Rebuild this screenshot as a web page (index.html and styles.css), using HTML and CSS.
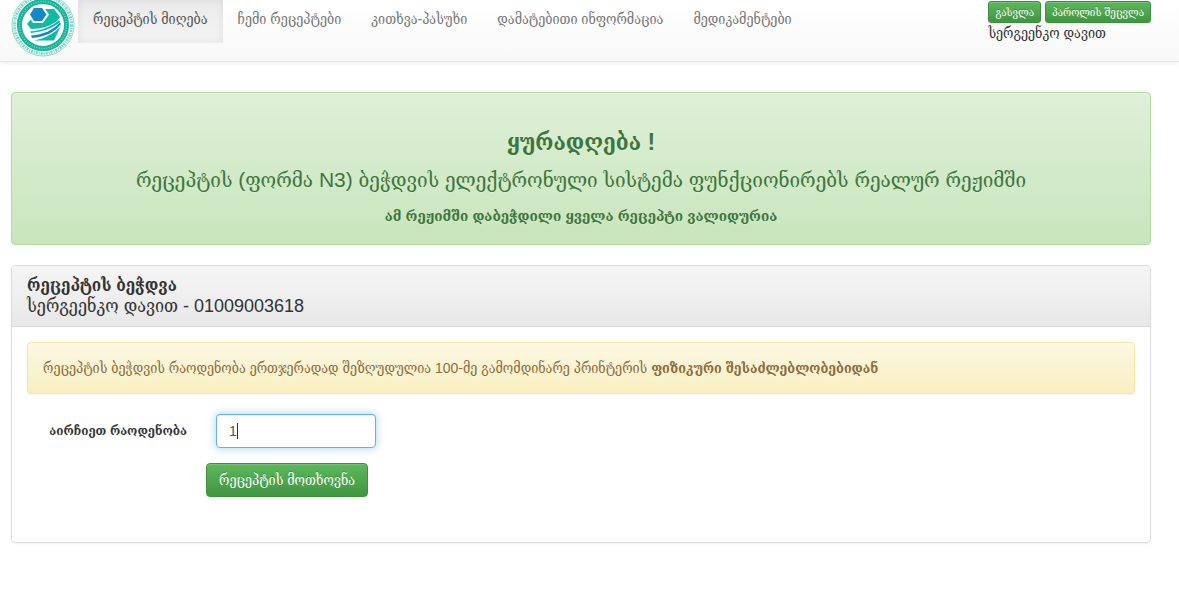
FILE: index.html
```html
<!DOCTYPE html>
<html lang="ka">
<head>
    <meta charset="UTF-8">
    <meta name="viewport" content="width=device-width, initial-scale=1.0">
    <title>რეცეპტის მიღება</title>
    <link rel="stylesheet" href="styles.css">
</head>
<body>
    <header class="navbar">
        <a class="logo" href="#" aria-label="მთავარი">
            <svg viewBox="0 0 64 64" width="64" height="64">
                <circle cx="32" cy="32" r="31" fill="#f4fcfa" stroke="#8ddccf" stroke-width="1" />
                <circle cx="32" cy="32" r="28.5" fill="none" stroke="#7fd6c8" stroke-width="3" stroke-dasharray="2 1 1 1" />
                <circle cx="32" cy="32" r="23.5" fill="#fff" stroke="#17b39b" stroke-width="5" />
                <circle cx="32" cy="32" r="23.5" fill="none" stroke="#7fd6c8" stroke-width="1.5" stroke-dasharray="1 1.5" />
                <path d="M33 16h10l6 8-3 4c-6 5-16 8-26 8l-4-5 4-5z" fill="#0fb9a2" />
                <path d="M22 13h10l6 8.500-6 8.500H22l-6-8.500z" fill="#fff" />
                <path d="M23 15h8l4.500 6.500L31 28h-8l-4-6.500z" fill="#1687c6" />
                <path d="M19 38.500c12-1 22-5 29-11.500l1 2c-7 6-16 9.500-29 11z" fill="#0fb9a2" />
                <path d="M20 42.500c12-1 22-5 29-13l1 1.500c-6 8-16 13-29 14z" fill="#1687c6" />
                <path d="M23 47.500c11-2 20-7 27-14.500l-7 14.500z" fill="#0fb9a2" />
            </svg>
        </a>
        <nav>
            <ul class="menu">
                <li><a class="active" href="#">რეცეპტის მიღება</a></li>
                <li><a href="#">ჩემი რეცეპტები</a></li>
                <li><a href="#">კითხვა-პასუხი</a></li>
                <li><a href="#">დამატებითი ინფორმაცია</a></li>
                <li><a href="#">მედიკამენტები</a></li>
            </ul>
        </nav>
        <div class="user">
            <div class="user-buttons">
                <button type="button" class="btn btn-xs">გასვლა</button>
                <button type="button" class="btn btn-xs">პაროლის შეცვლა</button>
            </div>
            <div>სერგეენკო დავით</div>
        </div>
    </header>

    <main>
        <div class="alert alert-success">
            <h3><strong>ყურადღება !</strong></h3>
            <p class="lead">რეცეპტის (ფორმა N3) ბეჭდვის ელექტრონული სისტემა ფუნქციონირებს რეალურ რეჟიმში</p>
            <p><strong>ამ რეჟიმში დაბეჭდილი ყველა რეცეპტი ვალიდურია</strong></p>
        </div>

        <section class="panel">
            <div class="panel-heading">
                <h3>რეცეპტის ბეჭდვა</h3>
                <div>სერგეენკო დავით - 01009003618</div>
            </div>
            <div class="panel-body">
                <div class="alert alert-warning">
                    რეცეპტის ბეჭდვის რაოდენობა ერთჯერადად შეზღუდულია 100-მე გამომდინარე პრინტერის <strong>ფიზიკური შესაძლებლობებიდან</strong>
                </div>
                <form id="printForm">
                    <label for="count">აირჩიეთ რაოდენობა</label>
                    <div class="field">
                        <input type="text" id="count" value="1" autofocus />
                        <span class="caret"></span>
                    </div>
                    <button type="submit" class="btn">რეცეპტის მოთხოვნა</button>
                </form>
            </div>
        </section>
    </main>
    <script>
        const count = document.getElementById("count");
        count.focus();
        count.setSelectionRange(1, 1);

        document.getElementById("printForm").addEventListener("submit", function (event) {
            event.preventDefault();
        });
    </script>
</body>
</html>
```
FILE: styles.css
```css
* {
    box-sizing: border-box;
}
body {
    margin: 0;
    font-family: "Liberation Sans", "DejaVu Serif Condensed", "DejaVu Serif", sans-serif;
    font-size: 14px;
    line-height: 20px;
    color: #333;
    background-color: #fff;
}
h3, p, ul {
    margin: 0;
    padding: 0;
}
.navbar {
    display: flex;
    align-items: flex-start;
    height: 62px;
    padding: 0 28px 0 11px;
    background: linear-gradient(to bottom, #fff 0%, #f8f8f8 100%);
    border-bottom: 1px solid #e7e7e7;
    box-shadow: 0 1px 5px rgba(0, 0, 0, 0.075);
}
.logo {
    width: 67px;
    margin-top: -7px;
}
.logo svg {
    display: block;
}
.menu {
    display: flex;
    list-style: none;
}
.menu a {
    display: block;
    padding: 9px 15px 14px;
    color: #777;
    text-decoration: none;
    white-space: nowrap;
}
.menu .active {
    color: #555;
    background: linear-gradient(to bottom, #ebebeb 0%, #f3f3f3 100%);
    box-shadow: inset 0 0 9px rgba(0, 0, 0, 0.075);
}
.user {
    margin-left: auto;
    padding-top: 1px;
    white-space: nowrap;
}
.user-buttons {
    display: flex;
    gap: 4px;
}
.btn {
    padding: 6px 12px;
    font-family: inherit;
    font-size: 14px;
    line-height: 20px;
    color: #fff;
    text-shadow: 0 -1px 0 rgba(0, 0, 0, 0.2);
    background: linear-gradient(to bottom, #5cb85c 0%, #419641 100%);
    border: 1px solid #3e8f3e;
    border-radius: 4px;
    box-shadow: inset 0 1px 0 rgba(255, 255, 255, 0.15), 0 1px 1px rgba(0, 0, 0, 0.075);
    cursor: pointer;
}
.btn-xs {
    padding: 1px 6px;
    font-size: 11px;
    border-radius: 3px;
    line-height: 18px;
}
main {
    padding: 30px 28px 70px 11px;
}
.alert {
    padding: 15px;
    margin-bottom: 20px;
    border: 1px solid;
    border-radius: 4px;
    text-shadow: 0 1px 0 rgba(255, 255, 255, 0.2);
    box-shadow: inset 0 1px 0 rgba(255, 255, 255, 0.25), 0 1px 2px rgba(0, 0, 0, 0.05);
}
.alert-success {
    padding: 36px 15px 18px;
    text-align: center;
    font-size: 15px;
    color: #3c763d;
    background: linear-gradient(to bottom, #dff0d8 0%, #c8e5bc 100%);
    border-color: #b2dba1;
}
.alert-success h3 {
    font-size: 23px;
    line-height: 26px;
    margin-bottom: 10px;
}
.alert-success .lead {
    font-size: 21px;
    line-height: 30px;
    margin-bottom: 11px;
}
.alert-warning {
    color: #8a6d3b;
    background: linear-gradient(to bottom, #fcf8e3 0%, #f8efc0 100%);
    border-color: #f5e79e;
}
.panel {
    border: 1px solid #ddd;
    border-radius: 4px;
    box-shadow: 0 1px 2px rgba(0, 0, 0, 0.05);
}
.panel-heading {
    padding: 10px 15px;
    font-size: 18px;
    background: linear-gradient(to bottom, #f5f5f5 0%, #e8e8e8 100%);
    border-bottom: 1px solid #ddd;
    border-radius: 3px 3px 0 0;
}
.panel-heading h3 {
    font-size: 17px;
    line-height: 20px;
}
.panel-body {
    padding: 15px 15px 45px;
}
#printForm {
    display: grid;
    grid-template-columns: 160px 160px;
    column-gap: 29px;
    row-gap: 15px;
    align-items: center;
}
#printForm label {
    text-align: right;
    font-size: 13px;
    font-weight: bold;
    white-space: nowrap;
}
.field {
    position: relative;
}
#printForm input {
    display: block;
    width: 100%;
    height: 34px;
    padding: 6px 12px;
    font-family: inherit;
    font-size: 14px;
    color: #555;
    caret-color: transparent;
    border: 1px solid #ccc;
    border-radius: 4px;
}
#printForm input:focus {
    outline: 0;
    border-color: #66afe9;
    box-shadow: inset 0 1px 1px rgba(0, 0, 0, 0.075), 0 0 8px rgba(102, 175, 233, 0.6);
}
.caret {
    display: none;
    position: absolute;
    top: 9px;
    left: 21px;
    width: 1px;
    height: 16px;
    background-color: #333;
}
#printForm input:focus + .caret {
    display: block;
}
#printForm .btn {
    grid-column: 2;
    margin-left: -10px;
    justify-self: start;
    white-space: nowrap;
}
```
